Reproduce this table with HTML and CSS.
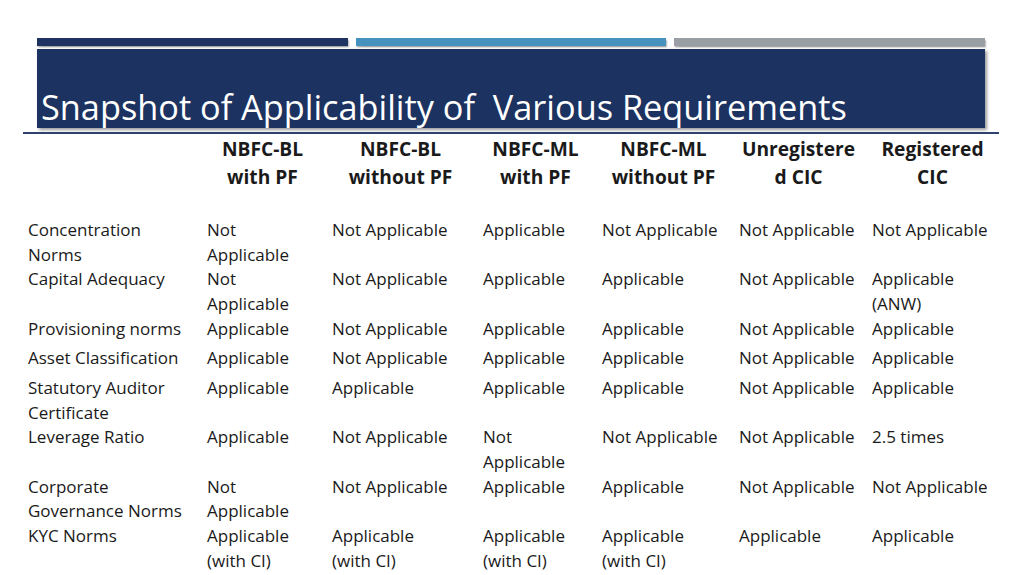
FILE: index.html
```html
<!DOCTYPE html>
<html lang="en">
<head>
<meta charset="utf-8">
<title>Snapshot of Applicability of Various Requirements</title>
<link rel="stylesheet" href="styles.css">
</head>
<body>
<div class="slide">
  <div class="bars">
    <div class="bar bar-navy"></div>
    <div class="bar bar-blue"></div>
    <div class="bar bar-gray"></div>
  </div>
  <div class="title-box">
    <h1 class="title">Snapshot of Applicability of&nbsp; Various Requirements</h1>
  </div>
  <div class="rule"></div>
  <table class="grid">
    <colgroup>
      <col class="c-label"><col class="c1"><col class="c2"><col class="c3"><col class="c4"><col class="c5"><col class="c6">
    </colgroup>
    <thead>
      <tr>
        <th></th>
        <th>NBFC-BL<br>with PF</th>
        <th>NBFC-BL<br>without PF</th>
        <th>NBFC-ML<br>with PF</th>
        <th>NBFC-ML<br>without PF</th>
        <th>Unregistere<br>d CIC</th>
        <th>Registered<br>CIC</th>
      </tr>
    </thead>
    <tbody>
      <tr><td>Concentration Norms</td><td>Not Applicable</td><td>Not Applicable</td><td>Applicable</td><td>Not Applicable</td><td>Not Applicable</td><td>Not Applicable</td></tr>
      <tr><td>Capital Adequacy</td><td>Not Applicable</td><td>Not Applicable</td><td>Applicable</td><td>Applicable</td><td>Not Applicable</td><td>Applicable (ANW)</td></tr>
      <tr><td>Provisioning norms</td><td>Applicable</td><td>Not Applicable</td><td>Applicable</td><td>Applicable</td><td>Not Applicable</td><td>Applicable</td></tr>
      <tr><td>Asset Classification</td><td>Applicable</td><td>Not Applicable</td><td>Applicable</td><td>Applicable</td><td>Not Applicable</td><td>Applicable</td></tr>
      <tr><td>Statutory Auditor Certificate</td><td>Applicable</td><td>Applicable</td><td>Applicable</td><td>Applicable</td><td>Not Applicable</td><td>Applicable</td></tr>
      <tr><td>Leverage Ratio</td><td>Applicable</td><td>Not Applicable</td><td>Not Applicable</td><td>Not Applicable</td><td>Not Applicable</td><td>2.5 times</td></tr>
      <tr><td>Corporate Governance Norms</td><td>Not Applicable</td><td>Not Applicable</td><td>Applicable</td><td>Applicable</td><td>Not Applicable</td><td>Not Applicable</td></tr>
      <tr><td>KYC Norms</td><td>Applicable (with&nbsp;CI)</td><td>Applicable (with&nbsp;CI)</td><td>Applicable (with&nbsp;CI)</td><td>Applicable (with&nbsp;CI)</td><td>Applicable</td><td>Applicable</td></tr>
    </tbody>
  </table>
</div>
</body>
</html>
```
FILE: styles.css
```css
html, body {
  margin: 0;
  padding: 0;
  background: #ffffff;
}
body {
  font-family: "Open Sans", "Noto Sans", "Liberation Sans", sans-serif;
  color: #1a1a1a;
}
.slide {
  width: 1024px;
  height: 575px;
  overflow: hidden;
  padding-top: 38px;
  box-sizing: border-box;
}
.bars {
  display: flex;
  gap: 8px;
  margin-left: 37px;
  width: 948px;
  height: 8px;
}
.bar {
  flex: 1;
  box-shadow: 1px 1.5px 1.5px rgba(0, 0, 0, 0.35);
}
.bar-navy { background: #1e3361; }
.bar-blue { background: #4692bf; }
.bar-gray { background: #9a9ea5; }
.title-box {
  margin-top: 3px;
  margin-left: 37px;
  width: 948px;
  height: 79px;
  background: #1c3260;
  box-shadow: 2px 2px 3px rgba(0, 0, 0, 0.4);
  display: flex;
  align-items: flex-end;
  box-sizing: border-box;
  padding: 0 0 0 4px;
}
.title {
  margin: 0;
  font-weight: 400;
  font-size: 34.3px;
  line-height: 42px;
  color: #ffffff;
  white-space: nowrap;
}
.rule {
  margin-left: 23px;
  width: 976px;
  height: 1.5px;
  margin-top: 4px;
  background: #2e4270;
}
.grid {
  border-collapse: collapse;
  table-layout: fixed;
  margin-left: 21px;
  width: 979px;
  font-size: 17px;
}
.c-label { width: 179px; }
.c1 { width: 125px; }
.c2 { width: 151px; }
.c3 { width: 119px; }
.c4 { width: 137px; }
.c5 { width: 133px; }
.c6 { width: 135px; }
.grid th {
  font-weight: 700;
  font-size: 19.2px;
  line-height: 28px;
  text-align: center;
  vertical-align: top;
  padding: 1px 2px 0;
  height: 84.5px;
  box-sizing: border-box;
  white-space: nowrap;
}
.grid td {
  line-height: 24.7px;
  height: 29.5px;
  vertical-align: top;
  padding: 0 7px;
  box-sizing: border-box;
}
```
